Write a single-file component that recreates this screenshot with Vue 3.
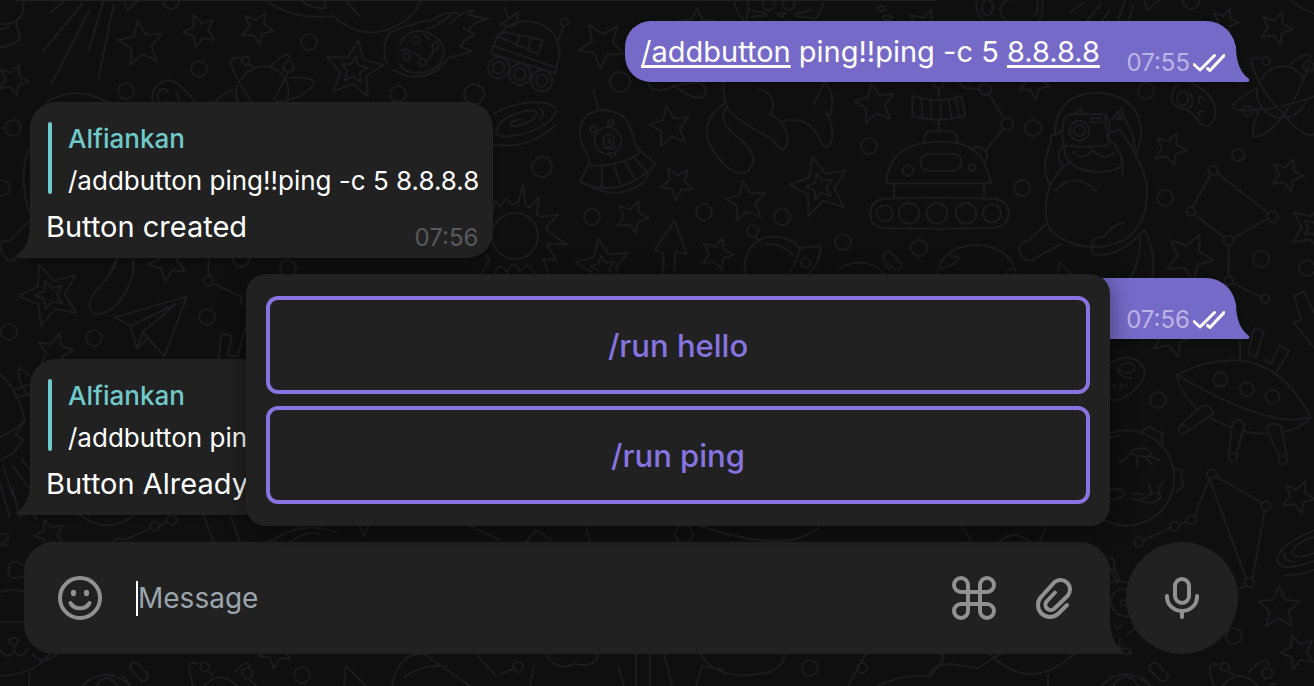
<script setup>
import { ref } from 'vue'

const draft = ref('')
const keyboard = ['/run hello', '/run ping']
const replies = [
  { id: 1, author: 'Alfiankan', quote: '/addbutton ping!!ping -c 5 8.8.8.8', text: 'Button created', time: '07:56' },
  { id: 2, author: 'Alfiankan', quote: '/addbutton ping!!ping -c 5 8.8.8.8', text: 'Button Already', time: '' }
]

function star([cx, cy, r, turn]) {
  const points = []
  for (let i = 0; i < 10; i++) {
    const radius = i % 2 ? r * 0.46 : r
    const angle = ((turn - 90 + i * 36) * Math.PI) / 180
    points.push(`${(cx + radius * Math.cos(angle)).toFixed(1)},${(cy + radius * Math.sin(angle)).toFixed(1)}`)
  }
  return points.join(' ')
}

const stars = [
  [141, 44, 23, -8], [200, 31, 17, -22], [257, 28, 17, 28], [13, 80, 16, 22],
  [354, 70, 30, 8], [354, 70, 14, 8], [602, 45, 24, 40], [670, 127, 21, -10],
  [677, 183, 17, 40], [632, 217, 17, 22], [746, 202, 21, -8], [820, 187, 31, -14],
  [820, 187, 14, -14], [717, 254, 17, 20], [603, 266, 28, -10], [603, 268, 13, -10],
  [875, 104, 21, -10], [1170, 149, 17, 22], [1287, 175, 17, 22], [1189, 257, 25, 25],
  [1276, 28, 17, 22], [1314, 228, 26, 20], [1314, 228, 12, 20], [50, 295, 32, -20],
  [50, 295, 15, -20], [55, 352, 19, 12], [50, 535, 16, -20], [168, 262, 20, 45],
  [275, 652, 17, 40], [1298, 497, 17, 25], [1279, 608, 22, 0], [1298, 652, 18, -20],
  [1034, 83, 16, 30], [1225, 22, 14, 20], [925, 26, 18, 20], [697, 26, 18, 0],
  [1172, 336, 22, 20]
]

const dots = [
  [309, 42, 8], [199, 69, 8], [126, 91, 8], [398, 94, 8], [13, 128, 8], [2, 188, 8],
  [171, 1, 8], [474, 94, 10], [620, 82, 10], [542, 167, 10], [592, 217, 8], [704, 212, 8],
  [782, 217, 8], [869, 146, 8], [843, 242, 8], [919, 248, 8], [1022, 188, 8],
  [1033, 128, 8], [1146, 91, 8], [1165, 198, 8], [1238, 155, 6], [1261, 259, 8],
  [1307, 268, 8], [9, 332, 8], [94, 338, 8], [207, 317, 8], [241, 259, 8], [288, 268, 8],
  [1158, 400, 8], [1234, 636, 8], [1191, 1, 8], [302, 675, 8], [810, 668, 8]
]
</script>

<template>
  <main class="chat">
    <svg class="wallpaper" viewBox="0 0 1314 686" preserveAspectRatio="xMidYMid slice" aria-hidden="true">
      <g class="ink">
        <polygon v-for="(s, i) in stars" :key="'s' + i" :points="star(s)" />
        <circle v-for="(d, i) in dots" :key="'d' + i" :cx="d[0]" :cy="d[1]" :r="d[2]" />
      </g>
      <!-- upper left: light rays, orbiting planet, cat and helmet -->
      <g class="ink wide" transform="scale(.3333)">
        <path d="M150 38 190 5M246 12 128 156M268 32 154 252M312 0 266 152M341 14 294 242M0 72Q52 76 68 40L72 0M0 142Q26 142 61 118L48 66M0 88 28 82" />
        <path d="M458 306Q452 252 500 242 530 236 586 306M505 276a18 22 0 1 0-1 28M530 280q8 14 6 24" />
        <path d="M725 237a75 75 0 0 1 136 62M712 258q-8 26 2 48M755 306Q690 210 694 182q6-14 28-8M812 198q50-50 58-24M870 234q120-8 40 48-30 18-80 24M645 306q20-24 54-36M750 194 762 204M822 298 862 224" />
        <circle cx="737" cy="182" r="12" /><circle cx="866" cy="200" r="16" />
        <path d="M800 0Q870 60 1000 48 1110 146 1230 50 1254 28 1262 0M1040 5 1078 48M905 0Q930 28 978 24L972 0M372 0 382 32 416 0M140 306Q230 254 320 306M90 440Q52 520 88 640M90 660 28 724Q-8 716 4 756 30 800 50 770M400 774V820M350 774Q340 800 330 820" />
      </g>
      <!-- comet, rover, galaxy, sun, flying saucer, dog, arrow, rocket -->
      <g class="ink wide" transform="translate(400) scale(.3333)">
        <path d="M0 132Q14 92 62 92 108 100 124 130 142 160 120 190 90 226 30 216 8 210 0 192M-40 190Q-60 120-20 92L60 66 96 60Q140 30 176 42M80 86Q120 76 150 46M150 70Q190 30 220 32L204 46 264 56Q226 62 204 92L190 84 224 104Q190 120 180 140L214 152Q180 170 150 170L142 178Q100 240 20 228L-20 210M0 152 20 148 60 168M86 178Q110 150 94 140M66 104q10-4 20 14" />
        <circle cx="48" cy="120" r="11" /><circle cx="20" cy="170" r="10" /><circle cx="68" cy="188" r="11" /><ellipse cx="106" cy="138" rx="8" ry="12" />
        <path d="M272 160Q300 60 390 64 480 78 478 170L466 220ZM280 138 472 204M292 108 310 96 428 120 414 162ZM348 142 360 106M384 152 394 114M300 76 354 36 350 72Q326 90 302 68M326 56 314 24M474 124 490 80" />
        <circle cx="494" cy="67" r="12" /><circle cx="296" cy="203" r="32" /><circle cx="296" cy="203" r="18" /><circle cx="360" cy="223" r="32" /><circle cx="360" cy="223" r="18" /><circle cx="425" cy="242" r="32" /><circle cx="425" cy="242" r="18" />
        <path d="M280 340Q370 296 440 310 492 326 446 366 370 416 300 408 270 394 318 354 390 320 410 336 418 358 352 378 318 380 342 362L362 358M278 434Q390 450 468 374M420 326Q440 338 418 360" />
        <circle cx="345" cy="708" r="69" />
        <path d="M278 634 286 604 300 620 320 596 336 614 356 606 369 552 376 614 390 622 418 590 410 646 424 650 476 644 438 680 444 694 500 734 444 730 446 744 470 780 430 776 446 820M246 820 268 780 258 766M284 820Q300 780 322 818 340 770 360 816 384 776 406 820" />
        <path d="M568 474Q520 402 552 356 600 308 670 350 696 378 708 442M596 330 580 270M568 474Q560 496 580 498 660 498 712 464 730 450 708 442M566 494 540 546Q600 572 660 560 740 530 766 492L722 452M606 504V564M644 502 662 556M676 490 706 540M704 474 744 520M574 562Q660 600 730 548L744 524M630 460 634 474M644 458 648 470" />
        <circle cx="624" cy="422" r="40" /><ellipse cx="626" cy="422" rx="16" ry="20" /><circle cx="628" cy="424" r="4" /><circle cx="580" cy="388" r="9" /><circle cx="632" cy="368" r="9" /><path d="M612 442q18 12 34-2" />
        <path d="M746 246Q742 276 800 268 850 246 900 250 930 270 910 292 880 300 820 256M970 246Q970 310 990 336 1030 370 1120 420 1150 470 1162 430 1166 370 1110 344 1140 290 1078 266M974 310Q900 360 928 430 980 530 1040 518 1090 470 1010 410 950 360 978 326M1148 362Q1220 350 1250 400 1280 470 1296 420 1300 380 1284 346 1270 336 1290 348 1310 290 1274 246L1242 312" />
        <path d="M790 820V758L764 750 824 662 860 762 826 756 822 820M1034 820Q1030 740 1090 714 1160 700 1200 744L1262 738Q1260 790 1226 820M1200 744Q1190 796 1164 820M1100 732Q1150 730 1180 768M1066 710 1082 730" />
        <circle cx="1058" cy="694" r="17" /><circle cx="1217" cy="788" r="14" />
        <path d="M1004 8Q1010 40 1032 62M1270 8Q1264 40 1240 62M1046 4 1040 62M1048 30 1096 40M1056 50 1100 46M1184 42 1234 30M1186 48 1236 54M1130 40h26l-12 12Z" /><circle cx="1106" cy="12" r="18" /><circle cx="1166" cy="12" r="18" />
      </g>
      <!-- moon robot, photographer cat, constellation -->
      <g class="ink wide" transform="translate(840) scale(.3333)">
        <path d="M218 288Q294 312 364 288L376 348Q296 370 218 348ZM244 298 248 354M272 300 274 356M302 300V356M326 298 334 354M346 294 358 350M296 264V290M296 358V392M138 550Q146 440 260 428 400 410 436 496L454 550ZM162 550V592M432 550V592M130 596Q290 590 464 596 506 604 506 640 504 680 460 684 290 688 130 684 92 680 90 640 92 604 130 596ZM252 426Q250 394 276 394H326Q352 394 352 426M358 248 376 264 420 268M448 284 492 356M490 386 438 450M390 446Q430 430 442 466L436 486" />
        <rect x="242" y="462" width="122" height="50" rx="24" /><circle cx="296" cy="248" r="16" /><circle cx="436" cy="268" r="17" /><circle cx="502" cy="372" r="18" /><circle cx="204" cy="511" r="16" /><circle cx="396" cy="503" r="10" /><circle cx="134" cy="640" r="24" /><circle cx="207" cy="640" r="31" /><circle cx="291" cy="640" r="31" /><circle cx="378" cy="640" r="31" /><circle cx="456" cy="640" r="27" />
        <path d="M644 400Q650 280 772 278 900 284 904 400 900 440 888 460M672 356Q680 342 700 342H796L808 360 806 436Q740 446 672 436L666 400ZM796 342 798 390M706 340 720 324 726 340M816 358 846 324 856 360Q886 410 884 446M832 358 842 340 846 358ZM672 440Q674 510 770 516 840 514 848 490M700 456Q730 486 758 450 790 486 824 458M664 390 648 404Q628 400 632 430 600 500 630 556M688 490Q660 510 656 470 658 446 670 438M630 556Q660 500 688 490M630 556Q600 660 640 700 740 770 850 722 930 670 920 550 900 470 846 400 840 380 824 396 800 390 802 414L824 432Q856 480 846 526M648 572Q700 510 768 572M618 672 564 724Q530 726 540 760 560 800 600 766L664 732M852 670Q820 670 792 710 750 710 758 740 750 766 780 764 850 764 912 690M900 712Q902 780 870 836M914 692Q950 760 936 836" />
        <circle cx="718" cy="392" r="30" /><circle cx="718" cy="392" r="17" /><rect x="750" y="354" width="34" height="13" rx="6" />
        <path d="M1010 256Q980 300 1010 320 1060 330 1080 370 1104 392 1122 360 1140 300 1070 256L1050 244M1052 280Q1070 320 1036 328M1090 294Q1070 284 1078 308M1090 334Q1070 330 1080 350" /><ellipse cx="1028" cy="295" rx="17" ry="22" />
        <path d="M1264 238a72 72 0 0 1 126-4M1250 262Q1246 330 1310 352 1376 360 1402 296M1364 296 1408 200M1242 270Q1130 330 1220 332L1302 324M1324 320 1422 290M1346 322Q1280 420 1242 408 1230 390 1256 336M1338 352Q1400 420 1422 402M1256 174Q1224 168 1238 200 1270 290 1346 356M1350 194Q1400 150 1412 170" /><circle cx="1278" cy="183" r="12" /><circle cx="1406" cy="200" r="16" /><circle cx="1223" cy="332" r="14" />
        <path d="M1112 526 1058 620M1132 520 1286 640M1064 644 1152 712M1180 714 1284 656M1166 738V826" /><circle cx="1119" cy="511" r="14" /><circle cx="1052" cy="634" r="13" /><circle cx="1298" cy="650" r="16" /><circle cx="1166" cy="722" r="15" />
        <path d="M290 820Q310 738 410 734 510 740 528 820M300 808Q360 790 356 770L330 768M502 820Q500 800 524 808M0 804Q60 772 114 804L132 820M128 788 150 810M130 776Q130 752 152 756L184 792Q190 808 168 812ZM652 820 660 788 690 820" />
        <path d="M408 0Q408 40 430 62M606 0Q614 40 596 62M480 30Q490-8 520 0M480 26Q484 50 500 62M584 48Q600 30 590 0M690 38 732 6M742 62 784 10M786 62 808 32M834 62 856 0M866 62 880 14M914 0 922 30 958 0M1350 0Q1386 30 1422 40" /><ellipse cx="442" cy="22" rx="16" ry="24" /><ellipse cx="124" cy="26" rx="12" ry="7" /><ellipse cx="142" cy="54" rx="14" ry="7" />
      </g>
      <!-- left edge: shooting star, paper plane, bear -->
      <g class="ink wide" transform="translate(0 240) scale(.3333)">
        <path d="M344 232 560 170 494 348 428 278 410 326 392 258ZM392 258 528 192 424 280M410 326 440 300M352 56Q340 100 290 150 250 200 284 222 340 226 380 150 410 90 398 56M626 56V106M638 130 724 170M656 356 664 280 696 288 684 344 712 350 736 266" /><circle cx="625" cy="123" r="14" /><circle cx="736" cy="180" r="14" />
        <path d="M0 402Q60 460 74 540 50 570 0 592M56 382Q50 430 90 470M56 382 90 408M36 450 88 434M46 474 90 462M74 544Q60 560 46 584L70 598Q50 640 0 660M10 680 40 770M66 660 90 690M40 680 88 744M0 730 28 830M36 744 60 830M80 780 110 838M236 822Q320 890 408 822M374 900 450 866M478 856 502 846M342 906Q350 886 370 900M610 822 640 906M690 822 720 906M806 906Q850 880 900 862" /><circle cx="464" cy="859" r="14" /><circle cx="515" cy="840" r="14" />
        <path d="M0 882Q30 876 24 894 0 920 6 916L22 914M72 976Q30 950 24 990 26 1024 72 1010M0 1056Q40 1046 72 1054M0 1146 72 1146M26 1200Q40 1186 56 1200 50 1216 42 1216 30 1214 26 1200M42 1216V1236Q20 1260 0 1230M42 1236Q66 1260 84 1226M0 1308Q110 1300 148 1242M88 1300V1338M98 1240Q120 1280 170 1244M246 1338Q320 1270 390 1338M288 1338Q320 1290 352 1338M364 1304 390 1332M390 1286Q390 1262 412 1268L444 1304Q446 1320 426 1324ZM580 1338Q560 1280 574 1270L596 1270M630 1298 638 1306M612 1338Q660 1286 712 1338M706 1296Q740 1254 750 1280M750 1320 770 1338" /><circle cx="614" cy="1281" r="13" /><circle cx="742" cy="1300" r="16" />
      </g>
      <!-- right edge: landing saucer, moon, constellation, galaxy, owl -->
      <g class="ink wide" transform="translate(1080 260) scale(.3333)">
        <path d="M290 344Q400 290 500 304 620 330 692 472 570 510 290 344ZM290 344Q300 400 352 448M390 474Q420 490 452 502M492 514Q530 524 570 520M604 516Q660 510 692 472M300 496 366 438Q390 430 400 460L320 516M446 580 458 486Q474 470 494 492L470 580M598 590 558 504Q580 480 604 500L620 586M506 284 516 226M506 284 528 290M554 300 574 310 598 256 628 272 586 342M516 226 524 204 552 214 528 290M480 236V300M698 260 640 186 664 180 642 108 672 94 702 160" />
        <circle cx="421" cy="358" r="21" /><circle cx="501" cy="388" r="21" /><circle cx="577" cy="410" r="21" /><circle cx="309" cy="508" r="13" /><circle cx="458" cy="592" r="13" /><circle cx="609" cy="600" r="13" />
        <path d="M90 310Q150 270 190 320 206 360 150 400 110 430 90 416M110 324Q120 356 156 354M90 372Q104 370 104 388M120 388Q118 368 138 376" /><ellipse cx="142" cy="324" rx="22" ry="16" />
        <path d="M90 520A143 143 0 1 1 72 780M186 514 206 500 248 520 246 548M286 626 308 632 304 652 310 680 288 694M90 534 118 526M120 606Q136 600 150 580 160 560 200 566 220 580 208 588 180 594 150 580M208 588 238 600M170 594V618M196 592 216 612M90 690Q130 680 132 704 110 724 90 716M150 716 180 722Q220 738 242 712 240 690 210 704L180 722M160 700 188 704M206 672 214 700M252 664Q234 680 240 700" />
        <path d="M388 656 344 766M408 650 546 728M388 656 498 954M554 752 518 954M320 786 298 794M270 806 190 840M474 990 496 976M446 0V48M460 70 542 110" /><circle cx="395" cy="642" r="14" /><circle cx="558" cy="738" r="14" /><circle cx="508" cy="967" r="14" /><circle cx="334" cy="779" r="14" /><circle cx="284" cy="799" r="14" /><circle cx="177" cy="846" r="14" /><circle cx="446" cy="62" r="13" /><circle cx="556" cy="117" r="13" />
        <path d="M702 812Q600 850 590 900 600 940 702 904M702 832Q640 850 636 880 650 900 702 880M614 946Q660 946 702 930M614 880Q606 900 640 906M90 892Q110 900 100 930M90 924 108 960M104 924 118 960M90 966Q120 960 148 970M140 990Q100 980 92 1026 100 1070 150 1070M104 1092Q110 1116 124 1096M140 1126 166 1104M120 1136 118 1166Q150 1160 154 1180L128 1182" /><circle cx="130" cy="1028" r="9" />
        <path d="M64 1278Q130 1206 212 1278M100 1278Q136 1220 176 1278M182 1246 210 1276M208 1230Q208 1206 232 1210L264 1246Q268 1262 244 1264ZM402 1278Q380 1220 396 1212L416 1212M450 1236 458 1242M426 1278Q480 1216 534 1278M506 1236Q560 1180 568 1216M570 1272H586" /><circle cx="434" cy="1221" r="12" /><circle cx="562" cy="1240" r="16" />
      </g>
      <!-- strip beneath the message field -->
      <g class="ink">
        <path d="M344 686 346 666 366 686M392 686Q398 652 424 654M404 678Q420 664 446 666M424 654 470 686M478 656 496 676M500 674 516 668M534 666 530 686M546 654Q556 672 574 664 596 668 598 654M618 666 624 686M636 654V686M650 654V686M664 654 672 686M700 654Q720 684 770 672 786 664 784 654M696 686 702 666 724 670M848 686Q860 664 866 654M878 686Q900 674 930 676 950 654 940 654M930 676Q930 664 950 664L978 668 1000 654M990 654Q1030 694 1074 654M1048 674V686M270 542Q300 520 336 532M290 542Q306 530 320 534M360 526 364 536 368 526M470 526 500 540M526 542 536 530 552 540M586 526 590 542M700 526Q790 556 820 526M962 526 972 542M1000 542Q1012 528 1030 542M1046 526 1040 542" />
        <circle cx="518" cy="667" r="5" /><circle cx="684" cy="534" r="9" /><circle cx="862" cy="668" r="5" />
      </g>
    </svg>

    <div class="previous"></div>

    <section class="messages" aria-label="Messages">
      <template v-for="(m, i) in replies" :key="m.id">
        <article class="bubble out">
          <p v-if="i === 0" class="text"><a href="#addbutton">/addbutton</a> ping!!ping -c 5 <a href="#host">8.8.8.8</a></p>
          <footer class="meta">
            <time>{{ i === 0 ? '07:55' : '07:56' }}</time>
            <svg class="checks" viewBox="0 0 32 18" role="img" aria-label="Read">
              <path d="M1 10.5 7 16 21.5 1.5M14.5 14.5 17 16.5 31 1.5" />
            </svg>
          </footer>
          <svg class="tail right" viewBox="0 0 15 36" aria-hidden="true"><path d="M0 0H1C1 17 6 27 14 33 15 35 14 36 12 36H0Z" /></svg>
        </article>
        <article class="bubble in">
          <blockquote class="quote">
            <cite>{{ m.author }}</cite>
            <span>{{ m.quote }}</span>
          </blockquote>
          <p class="text">{{ m.text }}</p>
          <time v-if="m.time" class="stamp">{{ m.time }}</time>
          <svg class="tail left" viewBox="0 0 15 36" aria-hidden="true"><path d="M15 0H14C14 17 10 27 1 33 0 35 1 36 3 36H15Z" /></svg>
        </article>
      </template>
    </section>

    <form class="composer" @submit.prevent>
      <div class="field">
        <div class="keyboard">
          <button v-for="k in keyboard" :key="k" type="button" class="key">{{ k }}</button>
        </div>
        <button type="button" class="icon" aria-label="Emoji">
          <svg viewBox="0 0 44 44">
            <circle cx="22" cy="22" r="20" />
            <path d="M12.500 27C16 34 28 34 31.500 27" />
            <ellipse class="solid" cx="15.500" cy="17" rx="2.600" ry="3.200" /><ellipse class="solid" cx="28.500" cy="17" rx="2.600" ry="3.200" />
          </svg>
        </button>
        <span class="caret"></span>
        <input v-model="draft" class="input" type="text" placeholder="Message" aria-label="Message" />
        <button type="button" class="icon" aria-label="Bot commands">
          <svg viewBox="0 0 44 44"><path d="M16 9v26a7 7 0 1 1-7-7h26a7 7 0 1 1-7 7V9a7 7 0 1 1 7 7H9a7 7 0 1 1 7-7z" /></svg>
        </button>
        <button type="button" class="icon clip" aria-label="Attach file">
          <svg viewBox="0 0 44 44"><path d="M35 29 26.500 37.500A12 12 0 0 1 9.500 20.500L22.300 6.300A9.500 9.500 0 0 1 35.700 19.700L22.500 32.500A5 5 0 0 1 15 25L23 16.500" /></svg>
        </button>
        <svg class="tail right" viewBox="0 0 15 36" aria-hidden="true"><path d="M0 0H1C1 17 6 27 14 33 15 35 14 36 12 36H0Z" /></svg>
      </div>
      <button type="button" class="mic" aria-label="Record voice message">
        <svg viewBox="0 0 44 44"><rect x="15" y="3" width="14" height="24" rx="7" /><path d="M7 20v1a15 14 0 0 0 30 0v-1M22 35v6" /></svg>
      </button>
    </form>
  </main>
</template>

<style>
body {
  margin: 0;
  background: #0f0f0f;
}
</style>

<style scoped>
.chat {
  position: relative;
  display: flex;
  flex-direction: column;
  box-sizing: border-box;
  min-height: 100vh;
  overflow: hidden;
  background: #0f0f0f;
  color: #fff;
  font-family: Inter, "Liberation Sans", sans-serif;
}
.wallpaper {
  position: absolute;
  inset: 0;
  width: 100%;
  height: 100%;
}
.ink {
  fill: none;
  stroke: #1c1c1e;
  stroke-width: 2;
  stroke-linejoin: round;
  stroke-linecap: round;
}
.ink.wide {
  stroke-width: 6;
}
.previous {
  position: relative;
  width: 70%;
  height: 1px;
  margin-left: 16px;
  background: #212121;
}
.messages {
  position: relative;
  flex: 1;
  display: flex;
  flex-direction: column;
  align-items: flex-start;
  gap: 20px;
  padding: 20px 78px 27px 30px;
}
.bubble {
  position: relative;
  box-sizing: border-box;
  box-shadow: 0 2px 4px rgba(0, 0, 0, 0.3);
}
.text {
  margin: 0;
  font-size: 29px;
  line-height: 50px;
  white-space: nowrap;
}
.out {
  align-self: flex-end;
  display: flex;
  align-items: flex-start;
  justify-content: space-between;
  min-width: 611px;
  height: 61px;
  gap: 23px;
  padding: 6px 11px 0 16px;
  border-radius: 26px 30px 0 26px;
  background: #766ac8;
}
.out a {
  color: #fff;
  text-decoration: underline;
  text-decoration-thickness: 3px;
  text-underline-offset: 3px;
  text-decoration-skip-ink: none;
}
.meta {
  display: flex;
  align-items: center;
  gap: 3px;
  margin-left: auto;
  padding-top: 20px;
  line-height: 32px;
}
time {
  font-size: 24px;
  color: #bbb5e4;
}
.checks {
  width: 32px;
  height: 18px;
  fill: none;
  stroke: #fff;
  stroke-width: 3;
  stroke-linecap: round;
  stroke-linejoin: round;
}
.in {
  padding: 16px 14px 6px 16px;
  border-radius: 26px 26px 26px 0;
  background: #212121;
}
.quote {
  position: relative;
  display: flex;
  flex-direction: column;
  margin: 0;
  padding-left: 22px;
  font-size: 26px;
  line-height: 42px;
  white-space: nowrap;
}
.quote::before {
  content: "";
  position: absolute;
  top: 4px;
  bottom: 8px;
  left: 2px;
  width: 4px;
  border-radius: 2px;
  background: #70c9ca;
}
.quote cite {
  color: #70c9ca;
  font-style: normal;
  font-weight: 500;
}
.stamp {
  position: absolute;
  right: 15px;
  bottom: 4px;
  line-height: 32px;
  color: #57595c;
}
.tail {
  position: absolute;
  bottom: 0;
  width: 15px;
  height: 36px;
}
.tail.left {
  right: 100%;
  margin-right: -1px;
  fill: #212121;
}
.tail.right {
  left: 100%;
  margin-left: -1px;
  fill: #766ac8;
}
.composer {
  position: relative;
  display: flex;
  gap: 16px;
  padding: 0 76px 32px 24px;
}
.field {
  position: relative;
  flex: 1;
  display: flex;
  align-items: center;
  min-width: 0;
  box-sizing: border-box;
  padding: 0 34px;
  border-radius: 30px 30px 0 30px;
  background: #212121;
}
.field .tail {
  fill: #212121;
}
button {
  padding: 0;
  border: 0;
  background: none;
  font-family: inherit;
}
.icon {
  flex: none;
  width: 44px;
  height: 44px;
}
.clip {
  margin-left: 36px;
}
.icon svg,
.mic svg {
  display: block;
  width: 44px;
  height: 44px;
  fill: none;
  stroke: #919191;
  stroke-width: 4;
  stroke-linecap: round;
  stroke-linejoin: round;
}
.icon .solid {
  fill: #919191;
  stroke: none;
}
.caret {
  width: 2px;
  height: 35px;
  margin-left: 34px;
  background: #fff;
}
.input {
  flex: 1;
  min-width: 0;
  padding: 0;
  border: 0;
  outline: 0;
  background: none;
  color: #fff;
  font-family: inherit;
  font-size: 28px;
  line-height: 40px;
}
.input::placeholder {
  color: #9aa5ae;
  opacity: 1;
}
.keyboard {
  position: absolute;
  right: 0;
  bottom: calc(100% + 16px);
  display: flex;
  flex-direction: column;
  gap: 12px;
  box-sizing: border-box;
  width: 864px;
  max-width: 100%;
  padding: 22px 20px;
  border-radius: 20px;
  background: #212121;
  box-shadow: 0 2px 24px rgba(0, 0, 0, 0.45);
}
.key {
  height: 98px;
  border: 4px solid #8774e1;
  border-radius: 12px;
  color: #8774e1;
  font-size: 31px;
  font-weight: 500;
}
.mic {
  flex: none;
  display: grid;
  place-items: center;
  width: 112px;
  height: 112px;
  border-radius: 50%;
  background: #212121;
}
</style>
